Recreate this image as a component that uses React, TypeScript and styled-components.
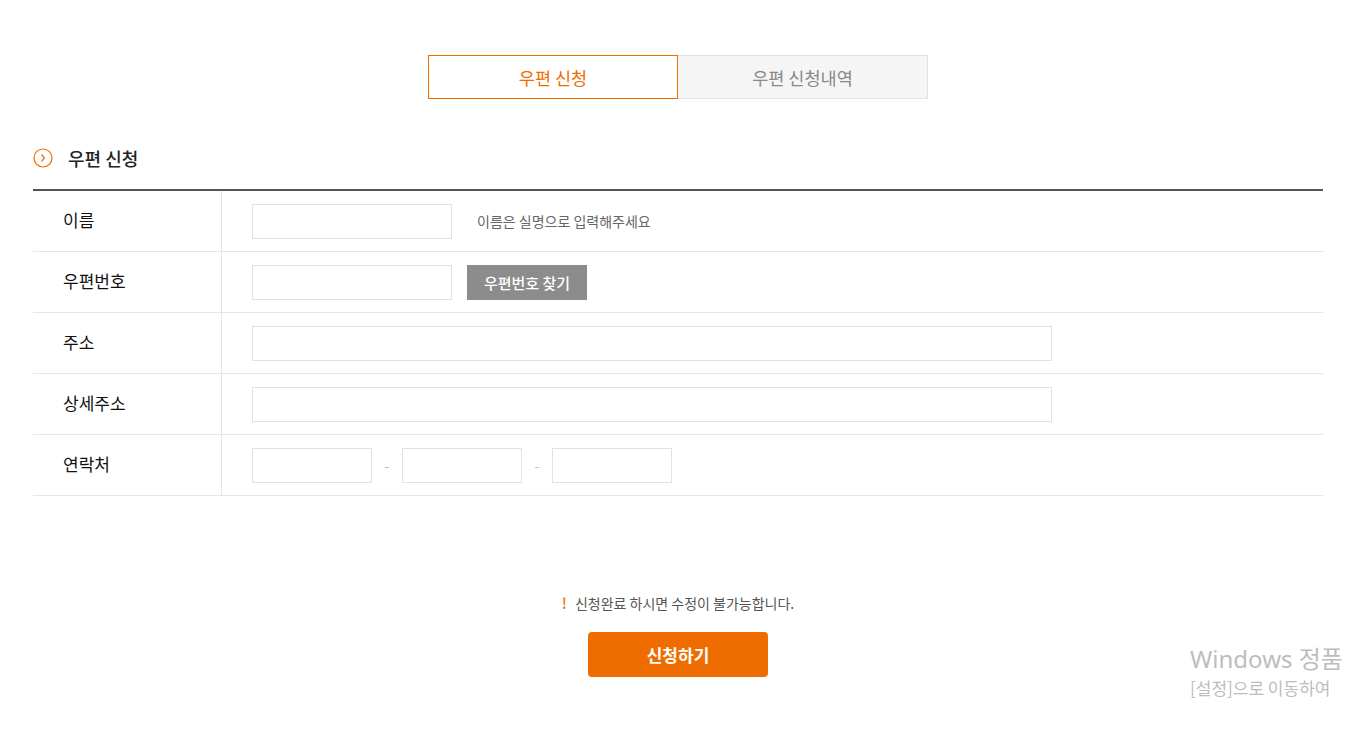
import React from "react";
import styled, { createGlobalStyle } from "styled-components";

const ORANGE = "#ef6d00";

const GlobalStyle = createGlobalStyle`
  html, body {
    margin: 0;
    padding: 0;
    background: #fff;
  }
  body {
    font-family: "Noto Sans CJK KR", "Noto Sans", sans-serif;
    color: #222;
    overflow: hidden;
  }
  * { box-sizing: border-box; }
`;

const Page = styled.div`
  position: relative;
  width: 1358px;
  height: 729px;
  padding: 55px 35px 0 33px;
`;

const Tabs = styled.div`
  display: flex;
  justify-content: center;
`;

const Tab = styled.button<{ $active?: boolean }>`
  width: 250px;
  height: 44px;
  margin: 0;
  padding: 0;
  font-family: inherit;
  font-size: 17.5px;
  font-weight: 400;
  cursor: pointer;
  background: ${({ $active }) => ($active ? "#fff" : "#f5f5f5")};
  color: ${({ $active }) => ($active ? ORANGE : "#888")};
  border: 1px solid ${({ $active }) => ($active ? ORANGE : "#e2e2e2")};
  ${({ $active }) => (!$active ? "border-left: none;" : "")}
`;

const SectionTitle = styled.h3`
  display: flex;
  align-items: center;
  gap: 15px;
  height: 22px;
  margin: 48px 0 20px;
  font-size: 18px;
  font-weight: 500;
  color: #222;
`;

const Table = styled.div`
  border-top: 2px solid #555;
`;

const Row = styled.div`
  display: flex;
  height: 61px;
  border-bottom: 1px solid #e5e5e5;
`;

const Label = styled.div`
  width: 189px;
  flex-shrink: 0;
  display: flex;
  align-items: center;
  padding-left: 30px;
  padding-bottom: 3px;
  border-right: 1px solid #e5e5e5;
  font-size: 17px;
  font-weight: 400;
  color: #111;
`;

const Value = styled.div`
  flex: 1;
  display: flex;
  align-items: center;
  padding-left: 30px;
`;

const Input = styled.input<{ $w: number }>`
  width: ${({ $w }) => $w}px;
  height: 35px;
  border: 1px solid #e2e2e2;
  padding: 0 10px;
  font-family: inherit;
  font-size: 14px;
  outline: none;
`;

const Hint = styled.span`
  margin-left: 25px;
  font-size: 14px;
  color: #666;
`;

const GrayButton = styled.button`
  width: 120px;
  height: 35px;
  margin-left: 15px;
  border: none;
  background: #8c8c8c;
  color: #fff;
  font-family: inherit;
  font-size: 15px;
  font-weight: 500;
  cursor: pointer;
`;

const Dash = styled.span`
  width: 30px;
  text-align: center;
  color: #bbb;
  font-size: 14px;
`;

const Footer = styled.div`
  display: flex;
  flex-direction: column;
  align-items: center;
  margin-top: 98px;
`;

const Notice = styled.p`
  margin: 0;
  font-size: 14px;
  line-height: 18px;
  color: #555;
  display: flex;
  align-items: center;
  gap: 8px;
`;

const Bang = styled.span`
  color: ${ORANGE};
  font-weight: 500;
  font-size: 15px;
`;

const SubmitButton = styled.button`
  width: 180px;
  height: 45px;
  margin-top: 20px;
  border: none;
  border-radius: 4px;
  background: ${ORANGE};
  color: #fff;
  font-family: inherit;
  font-size: 17px;
  font-weight: 700;
  cursor: pointer;
`;

const Watermark = styled.div`
  position: absolute;
  left: 1190px;
  top: 643px;
  width: 168px;
  overflow: hidden;
  white-space: nowrap;
  color: #bdbdbd;
  pointer-events: none;
`;

const WmTitle = styled.div`
  font-family: "Noto Sans", "Noto Sans CJK KR", sans-serif;
  font-size: 24px;
  line-height: 32px;
`;

const WmSub = styled.div`
  font-size: 17px;
  line-height: 26px;
`;

const ChevronCircle = () => (
  <svg width="20" height="20" viewBox="0 0 20 20" fill="none">
    <circle cx="10" cy="10" r="9" stroke={ORANGE} strokeWidth="1.2" />
    <path d="M8.5 6.5 L11.5 10 L8.5 13.5" stroke={ORANGE} strokeWidth="1.2" />
  </svg>
);

export default function App() {
  return (
    <>
      <GlobalStyle />
      <Page>
        <Tabs>
          <Tab $active>우편 신청</Tab>
          <Tab>우편 신청내역</Tab>
        </Tabs>

        <SectionTitle>
          <ChevronCircle />
          우편 신청
        </SectionTitle>

        <Table>
          <Row>
            <Label>이름</Label>
            <Value>
              <Input $w={200} />
              <Hint>이름은 실명으로 입력해주세요</Hint>
            </Value>
          </Row>
          <Row>
            <Label>우편번호</Label>
            <Value>
              <Input $w={200} />
              <GrayButton>우편번호 찾기</GrayButton>
            </Value>
          </Row>
          <Row>
            <Label>주소</Label>
            <Value>
              <Input $w={800} />
            </Value>
          </Row>
          <Row>
            <Label>상세주소</Label>
            <Value>
              <Input $w={800} />
            </Value>
          </Row>
          <Row>
            <Label>연락처</Label>
            <Value>
              <Input $w={120} />
              <Dash>-</Dash>
              <Input $w={120} />
              <Dash>-</Dash>
              <Input $w={120} />
            </Value>
          </Row>
        </Table>

        <Footer>
          <Notice>
            <Bang>!</Bang>
            신청완료 하시면 수정이 불가능합니다.
          </Notice>
          <SubmitButton>신청하기</SubmitButton>
        </Footer>

        <Watermark>
          <WmTitle>Windows 정품</WmTitle>
          <WmSub>[설정]으로 이동하여</WmSub>
        </Watermark>
      </Page>
    </>
  );
}
